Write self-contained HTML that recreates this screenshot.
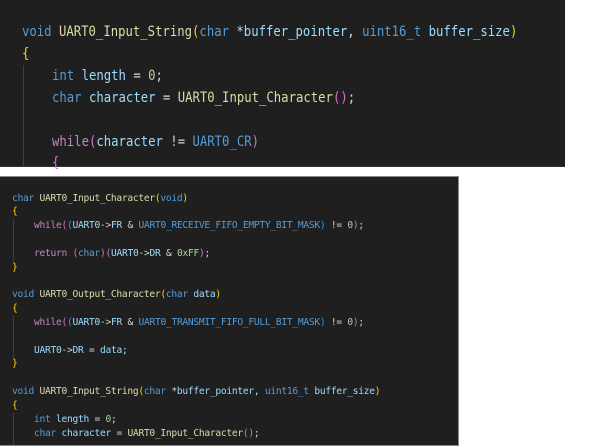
<!DOCTYPE html>
<html><head><meta charset="utf-8"><style>
html,body{margin:0;padding:0;background:#fff;width:612px;height:447px;overflow:hidden;position:relative}
.p{position:absolute;background:#1f1f1f;font-family:"DejaVu Sans Mono","Liberation Mono",monospace;white-space:pre;}
#t{left:0;top:0;width:565px;height:166px;border-bottom:1px solid #333}
#b{left:0;top:176px;width:458px;height:268px;border:1px solid #8a8a8a;border-left:none}
.l{position:absolute;left:0}
#t .l{font-size:14px;line-height:22px;transform:scaleX(0.877);transform-origin:0 0}
#b .l{font-size:9.6px;letter-spacing:-0.28px;line-height:14px}
.k{color:#569cd6}.f{color:#dcdcaa}.v{color:#9cdcfe}.c{color:#c586c0}.y{color:#ffd700}.n{color:#b5cea8}.m{color:#da70d6}.bl{color:#179fff}.w{color:#d4d4d4}
.g{position:absolute;width:1px;background:#404040}
</style></head><body>
<div class="p" id="t">
<div class="g" style="left:23px;top:65px;height:101px"></div>
<div class="l" style="top:21px;left:22px"><span class="k">void</span> <span class="f">UART0_Input_String</span><span class="y">(</span><span class="k">char</span> <span class="w">*</span><span class="v">buffer_pointer</span><span class="w">, </span><span class="k">uint16_t</span> <span class="v">buffer_size</span><span class="y">)</span></div>
<div class="l" style="top:43px;left:22px"><span class="y">{</span></div>
<div class="l" style="top:65px;left:52px"><span class="k">int</span> <span class="v">length</span> <span class="w">=</span> <span class="n">0</span><span class="w">;</span></div>
<div class="l" style="top:87px;left:52px"><span class="k">char</span> <span class="v">character</span> <span class="w">=</span> <span class="f">UART0_Input_Character</span><span class="m">()</span><span class="w">;</span></div>
<div class="l" style="top:131px;left:52px"><span class="c">while</span><span class="m">(</span><span class="v">character</span> <span class="w">!=</span> <span class="k">UART0_CR</span><span class="m">)</span></div>
<div class="l" style="top:152px;left:52px"><span class="m">{</span></div>
</div>
<div class="p" id="b">
<div class="g" style="left:13px;top:42px;height:42px"></div>
<div class="g" style="left:13px;top:139px;height:42px"></div>
<div class="g" style="left:13px;top:236px;height:32px"></div>
<div class="l" style="top:15px;left:12px"><span class="k">char</span> <span class="f">UART0_Input_Character</span><span class="y">(</span><span class="k">void</span><span class="y">)</span></div>
<div class="l" style="top:28px;left:12px"><span class="y">{</span></div>
<div class="l" style="top:42px;left:34px"><span class="c">while</span><span class="m">(</span><span class="bl">(</span><span class="v">UART0</span><span class="w">-&gt;</span><span class="v">FR</span> <span class="w">&amp;</span> <span class="k">UART0_RECEIVE_FIFO_EMPTY_BIT_MASK</span><span class="bl">)</span> <span class="w">!=</span> <span class="n">0</span><span class="m">)</span><span class="w">;</span></div>
<div class="l" style="top:70px;left:34px"><span class="c">return</span> <span class="m">(</span><span class="k">char</span><span class="m">)(</span><span class="v">UART0</span><span class="w">-&gt;</span><span class="v">DR</span> <span class="w">&amp;</span> <span class="n">0xFF</span><span class="m">)</span><span class="w">;</span></div>
<div class="l" style="top:84px;left:12px"><span class="y">}</span></div>
<div class="l" style="top:111px;left:12px"><span class="k">void</span> <span class="f">UART0_Output_Character</span><span class="y">(</span><span class="k">char</span> <span class="v">data</span><span class="y">)</span></div>
<div class="l" style="top:125px;left:12px"><span class="y">{</span></div>
<div class="l" style="top:139px;left:34px"><span class="c">while</span><span class="m">(</span><span class="bl">(</span><span class="v">UART0</span><span class="w">-&gt;</span><span class="v">FR</span> <span class="w">&amp;</span> <span class="k">UART0_TRANSMIT_FIFO_FULL_BIT_MASK</span><span class="bl">)</span> <span class="w">!=</span> <span class="n">0</span><span class="m">)</span><span class="w">;</span></div>
<div class="l" style="top:167px;left:34px"><span class="v">UART0</span><span class="w">-&gt;</span><span class="v">DR</span> <span class="w">=</span> <span class="v">data</span><span class="w">;</span></div>
<div class="l" style="top:180px;left:12px"><span class="y">}</span></div>
<div class="l" style="top:208px;left:12px"><span class="k">void</span> <span class="f">UART0_Input_String</span><span class="y">(</span><span class="k">char</span> <span class="w">*</span><span class="v">buffer_pointer</span><span class="w">, </span><span class="k">uint16_t</span> <span class="v">buffer_size</span><span class="y">)</span></div>
<div class="l" style="top:222px;left:12px"><span class="y">{</span></div>
<div class="l" style="top:236px;left:34px"><span class="k">int</span> <span class="v">length</span> <span class="w">=</span> <span class="n">0</span><span class="w">;</span></div>
<div class="l" style="top:250px;left:34px"><span class="k">char</span> <span class="v">character</span> <span class="w">=</span> <span class="f">UART0_Input_Character</span><span class="m">()</span><span class="w">;</span></div>
</div>
</body></html>
